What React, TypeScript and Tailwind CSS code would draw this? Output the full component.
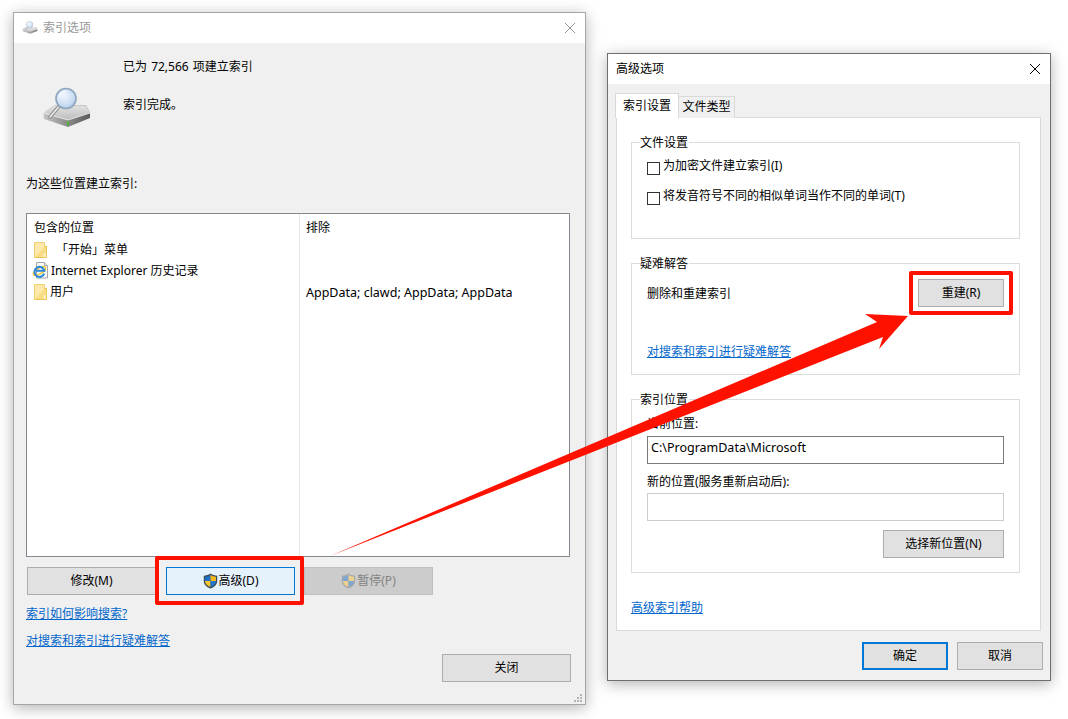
import React from 'react';

type Tone = 'normal' | 'focus' | 'off' | 'default';

const tones: Record<Tone, string> = {
  normal: 'bg-[#e1e1e1] border border-[#adadad] text-black',
  focus: 'bg-[#e5f1fb] border border-[#0078d7] text-black',
  off: 'bg-[#cccccc] border border-[#bfbfbf] text-[#838383]',
  default: 'bg-[#e1e1e1] border-2 border-[#0078d7] text-black',
};

const Btn = ({ tone = 'normal', className = '', children }: { tone?: Tone; className?: string; children: React.ReactNode }) => (
  <div className={`h-[28px] flex items-center justify-center ${tones[tone]} ${className}`}>{children}</div>
);

const Link = ({ children, className = '' }: { children: React.ReactNode; className?: string }) => (
  <div className={`h-[16px] leading-[16px] text-[#0066cc] underline ${className}`}>{children}</div>
);

const Close = ({ color }: { color: string }) => (
  <svg width="12" height="12" viewBox="0 0 12 12">
    <path d="M1 1 L11 11 M11 1 L1 11" stroke={color} strokeWidth="1" fill="none" />
  </svg>
);

const Folder = () => (
  <svg width="13" height="16" viewBox="0 0 13 16" className="shrink-0">
    <path d="M0.5 0.5 H10.5 V15.5 H0.5 Z" fill="#fce8ab" stroke="#f1d071" />
    <path d="M10.5 5 L12.5 4 V15.5 H0.5" fill="#f9dd85" stroke="#eec657" />
    <path d="M9.5 11 H12 V15 H9.5 Z" fill="#fdeebb" />
  </svg>
);

const IeIcon = () => (
  <svg width="17" height="17" viewBox="0 0 17 17" className="shrink-0">
    <path d="M4.5 0.5 H12.5 L15.5 3.5 V16 H4.5 Z" fill="#fafafa" stroke="#a8a8a8" />
    <path d="M12.5 0.5 V3.5 H15.5" fill="#e8e8e8" stroke="#a8a8a8" />
    <ellipse cx="7.5" cy="9" rx="7" ry="2.8" transform="rotate(-32 7.5 9)" fill="none" stroke="#f2c630" strokeWidth="1.4" />
    <path d="M12.2 11.6 A5 5 0 1 1 12.4 8.8 H4" fill="none" stroke="#2a86d8" strokeWidth="2" />
  </svg>
);

const Shield = ({ off = false }: { off?: boolean }) => (
  <svg width="15" height="16" viewBox="0 0 15 16" className="shrink-0">
    <path d="M7.5 0.6 C9.5 2 11.8 2.6 14.2 2.7 V8 C14.2 11.6 11.4 14.2 7.5 15.5 C3.6 14.2 0.8 11.6 0.8 8 V2.7 C3.2 2.6 5.5 2 7.5 0.6 Z" fill={off ? '#a9a9a9' : '#3b4a58'} />
    <path d="M7.5 2 V8 H2 V3.8 C4 3.6 5.9 3 7.5 2 Z" fill={off ? '#7fa6cf' : '#1f6fc4'} />
    <path d="M7.5 2 C9.1 3 11 3.6 13 3.8 V8 H7.5 Z" fill={off ? '#ecd08e' : '#f5b81e'} />
    <path d="M2 8 H7.5 V14 C4.4 13 2 11 2 8 Z" fill={off ? '#ecd08e' : '#f7c52c'} />
    <path d="M7.5 8 H13 C13 11 10.6 13 7.5 14 Z" fill={off ? '#7fa6cf' : '#2277cc'} />
  </svg>
);

const DriveIcon = ({ size, id, className = '' }: { size: number; id: string; className?: string }) => (
  <svg width={size} height={(size * 41) / 50} viewBox="0 0 50 41" className={className}>
    <defs>
      <linearGradient id={`${id}top`} x1="0" y1="0" x2="0" y2="1">
        <stop offset="0" stopColor="#e2e2e2" />
        <stop offset="1" stopColor="#bcbcbc" />
      </linearGradient>
      <linearGradient id={`${id}side`} x1="0" y1="0" x2="1" y2="0">
        <stop offset="0" stopColor="#c4c4c4" />
        <stop offset="0.5" stopColor="#8c8c8c" />
        <stop offset="1" stopColor="#5a5a5a" />
      </linearGradient>
      <radialGradient id={`${id}lens`} cx="0.4" cy="0.35" r="0.75">
        <stop offset="0" stopColor="#f0f6fd" />
        <stop offset="0.7" stopColor="#c6daf2" />
        <stop offset="1" stopColor="#9dbde4" />
      </radialGradient>
    </defs>
    <path d="M1.5 26 L12 18.5 H44 L48 26 V31 L26 40 L2 32 Z" fill={`url(#${id}side)`} />
    <path d="M1.5 26 L12 18.5 H44 L48 26 L26 33 Z" fill={`url(#${id}top)`} />
    <path d="M1.5 26 L26 33 L48 26" fill="none" stroke="#f2f2f2" strokeWidth="0.8" />
    <path d="M25 34.5 L26.6 34 V38 L25 38.5 Z" fill="#3fc21a" />
    <path d="M8 30 L16.5 20" stroke="#8d8d8d" strokeWidth="3.6" strokeLinecap="round" />
    <path d="M8 30 L16.5 20" stroke="#ededed" strokeWidth="1.6" strokeLinecap="round" />
    <circle cx="24" cy="11.5" r="10" fill={`url(#${id}lens)`} stroke="#8ea6bd" strokeWidth="1.6" />
    <path d="M17 11 A7 7 0 0 1 24 4.5" stroke="#ffffff" strokeWidth="1.2" fill="none" />
  </svg>
);

const Group = ({ title, className = '', children }: { title: string; className?: string; children: React.ReactNode }) => (
  <div className={`relative ml-[14px] w-[389px] border border-[#dcdcdc] ${className}`}>
    <div className="absolute left-[8px] top-[-8px] h-[16px] leading-[16px] bg-white pr-px">{title}</div>
    {children}
  </div>
);

const Check = ({ label, className = '' }: { label: string; className?: string }) => (
  <div className={`flex items-start pl-[15px] ${className}`}>
    <div className="w-[13px] h-[13px] mt-[4px] border border-[#333333] bg-white" />
    <div className="ml-[3px] h-[16px] leading-[16px]">{label}</div>
  </div>
);

const App = () => {
  return (
    <div className="relative w-[1068px] h-[719px] overflow-hidden bg-white text-[12px] text-black font-['Noto_Sans','Noto_Sans_CJK_SC',sans-serif]">
      {/* Indexing options window */}
      <div className="absolute left-[13px] top-[12px] w-[573px] h-[693px] flex flex-col border border-[#a6a6a6] bg-[#f0f0f0] shadow-[0_3px_14px_rgba(0,0,0,0.3)]">
        <div className="h-[30px] shrink-0 flex items-center bg-white pl-[8px] pr-[9px] text-[#999999]">
          <DriveIcon size={16} id="small" className="opacity-80" />
          <span className="ml-[5px]">索引选项</span>
          <span className="ml-auto">
            <Close color="#9a9a9a" />
          </span>
        </div>
        <div className="relative flex-1 pl-[12px] pr-[14px]">
          <div className="flex">
            <DriveIcon size={50} id="big" className="ml-[16px] mt-[44px] shrink-0" />
            <div className="ml-[31px]">
              <div className="mt-[16px] h-[16px] leading-[16px]">
                已为 <span className="px-px">72,566</span> 项建立索引
              </div>
              <div className="mt-[22px] h-[16px] leading-[16px]">索引完成。</div>
            </div>
          </div>
          <div className="mt-[48px] h-[16px] leading-[16px]">为这些位置建立索引:</div>

          <div className="mt-[21px] w-[544px] h-[344px] flex border border-[#828790] bg-white">
            <div className="w-[273px] border-r border-[#e5e5e5] pl-[7px] pt-[6px]">
              <div className="h-[16px] leading-[16px]">包含的位置</div>
              <div className="mt-[3px] h-[21px] flex items-center">
                <Folder />
                <span className="ml-[9px]">「开始」菜单</span>
              </div>
              <div className="h-[21px] flex items-center ml-[-2px]">
                <IeIcon />
                <span className="ml-[2px]">Internet Explorer 历史记录</span>
              </div>
              <div className="h-[21px] flex items-center">
                <Folder />
                <span className="ml-[3px]">用户</span>
              </div>
            </div>
            <div className="flex-1 pl-[6px] pt-[6px]">
              <div className="h-[16px] leading-[16px]">排除</div>
              <div className="mt-[46px] h-[21px] leading-[21px] text-[12.5px]">AppData; clawd; AppData; AppData</div>
            </div>
          </div>

          <div className="mt-[10px] flex">
            <Btn className="ml-px w-[129px]">修改(M)</Btn>
            <Btn tone="focus" className="ml-[10px] w-[129px] gap-px">
              <Shield />
              高级(D)
            </Btn>
            <Btn tone="off" className="ml-[9px] w-[129px] gap-px">
              <Shield off />
              暂停(P)
            </Btn>
          </div>
          <Link className="mt-[11px] w-fit">索引如何影响搜索?</Link>
          <Link className="mt-[11px] w-fit">对搜索和索引进行疑难解答</Link>
          <div className="mt-[5px] flex justify-end">
            <Btn className="w-[129px]">关闭</Btn>
          </div>
          <svg width="9" height="9" viewBox="0 0 9 9" className="absolute right-[2px] bottom-[1px]">
            <path d="M6 0h2v2H6zM3 3h2v2H3zM6 3h2v2H6zM0 6h2v2H0zM3 6h2v2H3zM6 6h2v2H6z" fill="#b4b4b4" />
          </svg>
        </div>
      </div>

      {/* Advanced options window */}
      <div className="absolute left-[607px] top-[53px] w-[444px] h-[628px] flex flex-col border border-[#6f6f6f] bg-[#f0f0f0] shadow-[0_3px_14px_rgba(0,0,0,0.3)]">
        <div className="h-[30px] shrink-0 flex items-center justify-between bg-white pl-[8px] pr-[9px]">
          <span>高级选项</span>
          <Close color="#000000" />
        </div>
        <div className="relative mt-[9px] ml-[7px] h-[25px] flex items-end z-10">
          <div className="w-[64px] h-[25px] flex items-center justify-center bg-white border border-b-0 border-[#d9d9d9]">索引设置</div>
          <div className="ml-[-1px] w-[57px] h-[22px] pb-[2px] flex items-center justify-center bg-[#f0f0f0] border border-b-0 border-[#d9d9d9]">文件类型</div>
        </div>
        <div className="ml-[8px] mt-[-1px] w-[425px] h-[514px] shrink-0 border border-[#d9d9d9] bg-white">
          <Group title="文件设置" className="mt-[24px] h-[97px]">
            <Check label="为加密文件建立索引(I)" className="pt-[15px]" />
            <Check label="将发音符号不同的相似单词当作不同的单词(T)" className="mt-[13px]" />
          </Group>
          <Group title="疑难解答" className="mt-[24px] h-[112px]">
            <div className="mt-[15px] flex items-center justify-between pl-[15px] pr-[15px]">
              <span className="pt-[2px]">删除和重建索引</span>
              <Btn className="w-[86px]">重建(R)</Btn>
            </div>
            <Link className="ml-[15px] mt-[37px] w-fit">对搜索和索引进行疑难解答</Link>
          </Group>
          <Group title="索引位置" className="mt-[24px] h-[174px]">
            <div className="px-[15px]">
              <div className="mt-[16px] h-[16px] leading-[16px]">当前位置:</div>
              <div className="mt-[4px] h-[28px] flex items-center border border-[#7a7a7a] pl-[3px] pb-[4px] text-[12.5px]">C:\ProgramData\Microsoft</div>
              <div className="mt-[10px] h-[16px] leading-[16px]">新的位置(服务重新启动后):</div>
              <div className="mt-[3px] h-[28px] border border-[#cccccc]" />
              <div className="mt-[9px] flex justify-end">
                <Btn className="w-[121px]">选择新位置(N)</Btn>
              </div>
            </div>
          </Group>
          <Link className="ml-[14px] mt-[27px] w-fit">高级索引帮助</Link>
        </div>
        <div className="mt-[11px] mr-[7px] flex justify-end gap-[9px]">
          <Btn tone="default" className="w-[86px]">确定</Btn>
          <Btn className="w-[86px]">取消</Btn>
        </div>
      </div>

      {/* Red annotations over the two windows */}
      <div className="absolute left-[155px] top-[556px] w-[149px] h-[49px] border-[4px] border-[#ff1100] rounded-[2px]" />
      <div className="absolute left-[909px] top-[271px] w-[104px] h-[44px] border-[4px] border-[#ff1100] rounded-[2px]" />
      <svg width="1068" height="719" viewBox="0 0 1068 719" className="absolute left-0 top-0 pointer-events-none">
        <polygon points="330,556 877,322 865,314 908,316 879,349 883,337" fill="#ff1100" />
      </svg>
    </div>
  );
};

export default App;
